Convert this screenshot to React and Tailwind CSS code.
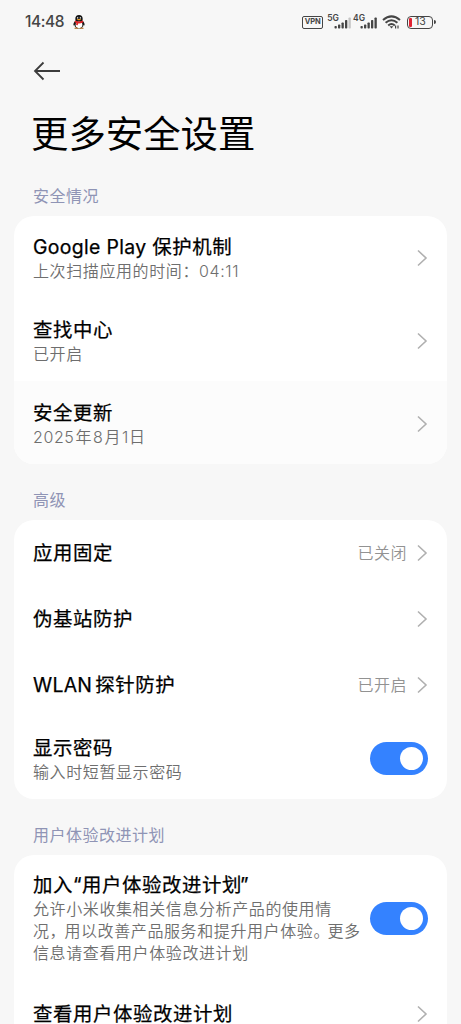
import React from 'react';

const Chevron = () => (
  <svg className="w-3 h-[18px] shrink-0" viewBox="0 0 12 18" fill="none" stroke="#b0b0b0" strokeWidth="1.6">
    <path d="M2 1.5 L10 9 L2 16.5" />
  </svg>
);

const Toggle = () => (
  <button type="button" role="switch" aria-checked="true"
    className="w-[58px] h-[33px] shrink-0 rounded-full bg-[#3482ff] flex items-center justify-end pr-[5px]">
    <span className="block w-[23px] h-[23px] rounded-full bg-white" />
  </button>
);

const Signal = ({ label, weak }) => (
  <div className="flex items-start">
    <span className="text-[8.5px] leading-[8px] font-semibold -mt-[2px] -mr-[5px]">{label}</span>
    <svg className="w-[18px] h-[14px] -mt-px" viewBox="0 0 18 14" fill="#454545">
      <rect x="0.5" y="11" width="2.3" height="2.5" rx="0.7" />
      <rect x="4" y="9.5" width="2.3" height="4" rx="0.7" />
      <rect x="7.5" y="7.5" width="2.3" height="6" rx="0.7" />
      <rect x="11" y="5" width="2.3" height="8.5" rx="0.7" />
      <rect x="14.5" y="2.5" width="2.3" height="11" rx="0.7" fill={weak ? '#c4c4c4' : '#454545'} />
    </svg>
  </div>
);

const Penguin = () => (
  <svg className="w-3 h-[14px]" viewBox="0 0 12 14">
    <path d="M2 6 C0.4 8 0 10 0.8 10.6 L2 9.5 L10 9.5 L11.2 10.6 C12 10 11.6 8 10 6 Z" fill="#151515" />
    <ellipse cx="6" cy="9.2" rx="4.7" ry="4.4" fill="#151515" />
    <ellipse cx="6" cy="4" rx="3.7" ry="4" fill="#151515" />
    <ellipse cx="6" cy="9.8" rx="3.4" ry="3.4" fill="#fff" />
    <ellipse cx="4.7" cy="2.9" rx="0.6" ry="0.8" fill="#fff" />
    <ellipse cx="7.3" cy="2.9" rx="0.6" ry="0.8" fill="#fff" />
    <ellipse cx="6" cy="4.6" rx="2.2" ry="0.7" fill="#f2a01e" />
    <path d="M2.1 5.6 Q6 7.6 9.9 5.6 L10.3 7.2 Q7.5 8.8 5 8.5 L4.8 10.3 L3.1 10 L3.3 8.1 L1.7 7.2 Z" fill="#e3262b" />
    <ellipse cx="3.4" cy="13.2" rx="2.1" ry="0.6" fill="#a8641c" />
    <ellipse cx="8.6" cy="13.2" rx="2.1" ry="0.6" fill="#a8641c" />
  </svg>
);

const StatusBar = () => (
  <div className="h-11 pl-[25px] pr-[25px] flex items-center justify-between text-[#454545]">
    <div className="flex items-center gap-[9px]">
      <span className="text-[15.5px] font-medium leading-none tracking-[-0.45px]">14:48</span>
      <Penguin />
    </div>
    <div className="flex items-center">
      <span className="w-[21px] h-[13px] border-[1.5px] border-[#454545] rounded-[2px] text-[7.5px] leading-none font-bold flex items-center justify-center mr-1">VPN</span>
      <Signal label="5G" weak />
      <div className="w-px" />
      <Signal label="4G" />
      <svg className="w-[19px] h-[14px] ml-[4px]" viewBox="0 0 19 14" fill="none" stroke="#454545" strokeWidth="2">
        <path d="M1 5 Q9.5 -2.2 18 5" />
        <path d="M3.6 7.8 Q9.5 2.8 15.4 7.8" />
        <path d="M6.2 10.4 Q9.5 7.6 12.8 10.4" />
        <path d="M7.6 11.2 L9.5 13.4 L11.4 11.2 Z" fill="#454545" stroke="none" />
        <path d="M13.6 10.5 V13.5 M16 10.5 V13.5" strokeWidth="1.2" />
      </svg>
      <div className="ml-[6px] w-[26px] h-[13px] rounded-[4px] border-[1.5px] border-[#454545] flex items-center pl-[1px]">
        <span className="w-[3px] h-[9px] rounded-[1px] bg-[#e02433]" />
        <span className="text-[10.5px] leading-none ml-[3px]">13</span>
      </div>
      <span className="w-[2px] h-1 ml-px rounded-r bg-[#454545]" />
    </div>
  </div>
);

const Section = ({ title, className = '', children }) => (
  <section className={className}>
    <h2 className="ml-[33px] h-5 text-[16px] tracking-[0.5px] leading-5 text-[#8f94b5]">{title}</h2>
    <div className="mt-[10px] mx-[14px] rounded-[20px] bg-white overflow-hidden">{children}</div>
  </section>
);

const Row = ({ title, desc, value, toggle, className }) => (
  <div className={`flex items-center justify-between pl-[19px] pr-[19px] whitespace-nowrap ${className}`}>
    <div>
      <p className="text-[19.4px] tracking-[0.6px] leading-[26px] font-normal text-black [-webkit-text-stroke:0.25px_black]">{title}</p>
      {desc && <div className="text-[16px] tracking-[0.6px] leading-[22px] font-[350] text-[#6e6e6e]">{desc}</div>}
    </div>
    {toggle ? <Toggle /> : (
      <div className="flex items-center gap-[9px]">
        {value && <span className="text-[16px] tracking-[0.5px] leading-5 font-[350] text-[#929292]">{value}</span>}
        <Chevron />
      </div>
    )}
  </div>
);

const App = () => {
  return (
    <div className="w-full h-[1024px] overflow-hidden bg-[#f7f7f7] font-['Inter','Noto_Sans_CJK_SC',sans-serif]">
      <StatusBar />

      <header className="pl-[33px]">
        <svg className="w-7 h-5 mt-[17px]" viewBox="0 0 28 20" fill="none" stroke="#3c3c3c" strokeWidth="1.8">
          <path d="M27 10 H2 M10.5 1.5 L2 10 L10.5 18.5" />
        </svg>
        <h1 className="mt-[30px] -ml-[2px] h-12 text-[37.4px] leading-[48px] text-black">更多安全设置</h1>
      </header>

      <Section title="安全情况" className="mt-[27px]">
        <Row className="h-[82.7px] pt-[2px]" title={<><span className="tracking-[0.35px]">Google Play </span>保护机制</>} desc="上次扫描应用的时间：04:11" />
        <Row className="h-[82.7px] pt-[2px]" title="查找中心" desc="已开启" />
        <Row
          className="h-[82.7px] pt-[2px] bg-[#fcfcfc]"
          title="安全更新"
          desc={<>2025<span className="mx-px">年</span>8<span className="mx-px">月</span>1日</>}
        />
      </Section>

      <Section title="高级" className="mt-[26px]">
        <Row className="h-[66px]" title="应用固定" value="已关闭" />
        <Row className="h-[66px]" title="伪基站防护" />
        <Row className="h-[66px]" title={<><span className="tracking-[0.3px]">WLAN</span><span className="ml-[3px]">探针防护</span></>} value="已开启" />
        <Row className="h-[81px]" title="显示密码" desc="输入时短暂显示密码" toggle />
      </Section>

      <Section title="用户体验改进计划" className="mt-[26px]">
        <Row
          className="h-[126px]"
          title={<>加入“用户体验改进计划<span className="-ml-[2px]">”</span></>}
          desc={
            <>
              <p>允许小米收集相关信息分析产品的使用情</p>
              <p>况<span className="tracking-[-1.2px]">，</span>用以改善产品服务和提升用户体验<span className="tracking-[-2px]">。</span>更多</p>
              <p>信息请查看用户体验改进计划</p>
            </>
          }
          toggle
        />
        <Row className="h-[66px]" title="查看用户体验改进计划" />
      </Section>
    </div>
  );
};

export default App;
